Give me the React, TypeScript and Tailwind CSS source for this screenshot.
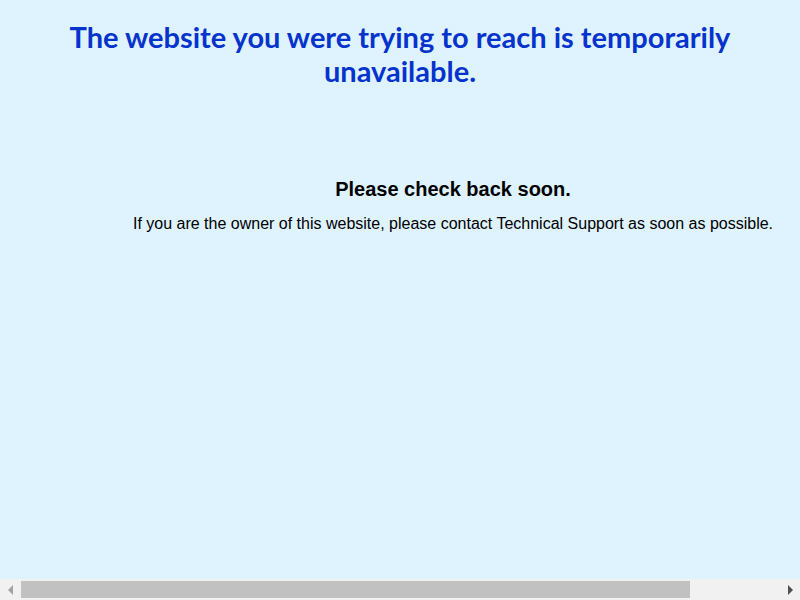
import React from "react";

const ScrollBar = () => (
  <div className="flex h-[21px] shrink-0 items-center bg-[#f1f1f1]">
    <div className="flex h-full w-[21px] items-center justify-center">
      <div className="ml-[-1px] h-0 w-0 border-y-[5px] border-r-[5px] border-y-transparent border-r-[#a3a3a3]"></div>
    </div>
    <div className="flex h-full flex-1 items-center">
      <div className="h-[17px] w-[669px] bg-[#c1c1c1]"></div>
    </div>
    <div className="flex h-full w-[21px] items-center justify-center">
      <div className="ml-[1px] h-0 w-0 border-y-[5px] border-l-[5px] border-y-transparent border-l-[#505050]"></div>
    </div>
  </div>
);

const App = () => {
  return (
    <div className="flex h-screen w-full flex-col overflow-hidden bg-[#dff3fe]">
      <div className="min-h-0 flex-1 overflow-hidden">
        <h1
          className="pt-[20px] px-12 text-center text-[29px] leading-[34px] font-bold text-[#0633cc]"
          style={{ fontFamily: '"Century Gothic", "Lato", "Liberation Sans", sans-serif' }}
        >
          The website you were trying to reach is temporarily unavailable.
        </h1>

        <div
          className="w-[906px] pt-[89px] text-center text-black"
          style={{ fontFamily: '"Liberation Sans", Arial, sans-serif' }}
        >
          <h2 className="text-[20px] leading-[24px] font-bold">Please check back soon.</h2>
          <p className="mt-[14px] text-[16px] leading-[18px]">
            If you are the owner of this website, please contact Technical Support as soon as possible.
          </p>
        </div>
      </div>
      <ScrollBar />
    </div>
  );
};

export default App;
